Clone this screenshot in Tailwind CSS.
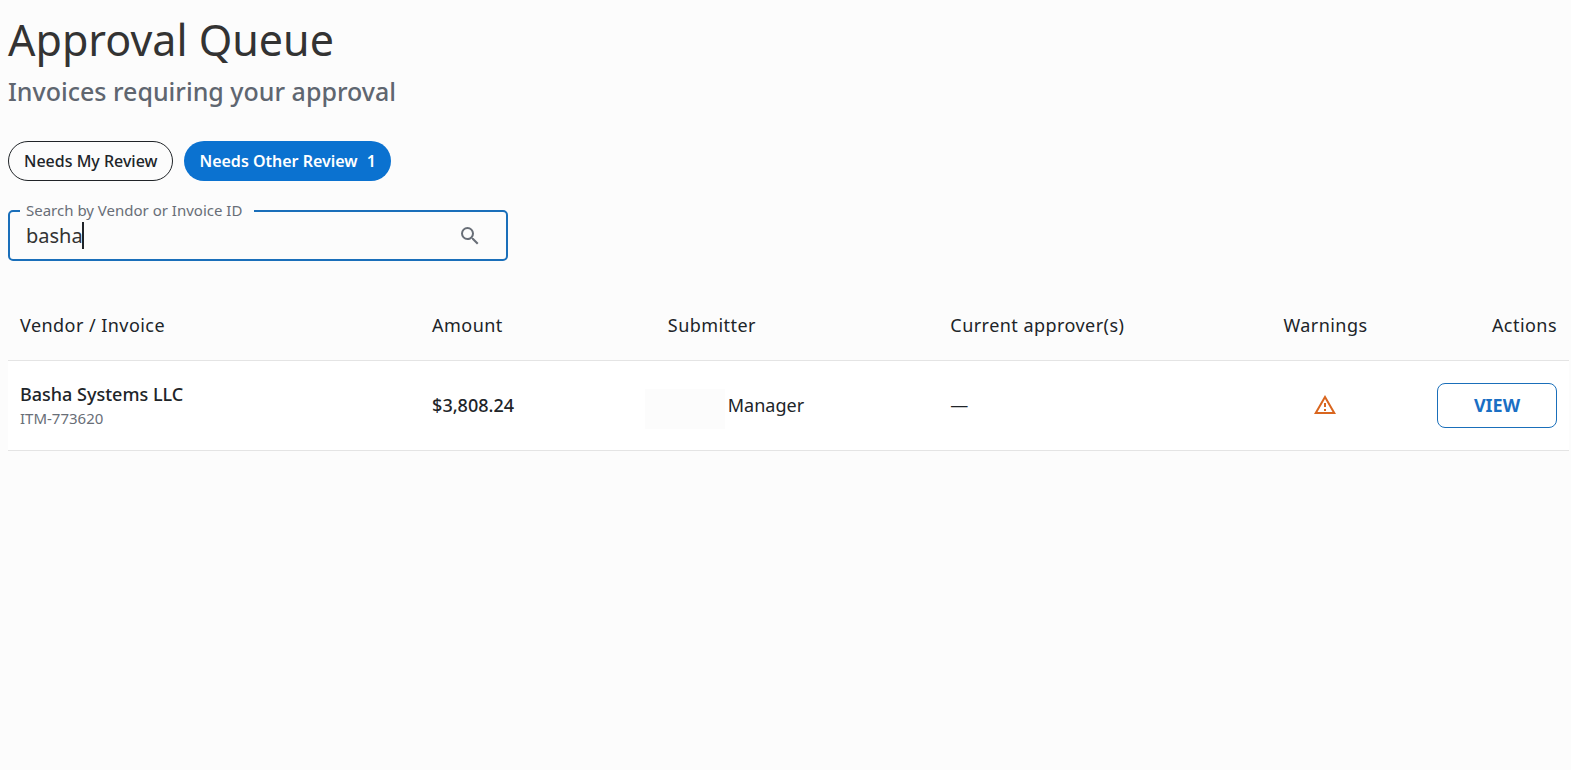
<!DOCTYPE html>
<html lang="en">
<head>
  <meta charset="UTF-8">
  <meta name="viewport" content="width=device-width, initial-scale=1.0">
  <title>Approval Queue</title>
  <script src="https://cdn.jsdelivr.net/npm/@tailwindcss/browser@4"></script>
</head>
<body class="bg-[#fcfcfc] font-['Noto_Sans',sans-serif] text-[#202428]">
  <main class="pl-2 pr-[2px] pt-[11px]">
    <h1 class="text-[43px] leading-[58px] text-[#333]">Approval Queue</h1>
    <p class="mt-1 text-[25px] leading-9 font-medium text-[#5f6670]">Invoices requiring your approval</p>

    <!-- Queue filters -->
    <div class="mt-8 flex gap-[11px]">
      <button type="button" class="h-10 rounded-full border border-[#202428] px-[15px] text-base font-medium">Needs My Review</button>
      <button type="button" class="flex h-10 items-center gap-[9px] rounded-full bg-[#0b72d0] px-[15px] text-base font-semibold text-white">
        <span>Needs Other Review</span>
        <span>1</span>
      </button>
    </div>

    <!-- Search -->
    <div class="relative mt-[29px] flex h-[51px] w-full max-w-[500px] items-center rounded-[5px] border-2 border-[#1a6fba] pl-4 pr-6">
      <label for="search" class="absolute -top-3 left-[10px] bg-[#fcfcfc] pl-[6px] pr-3 text-[15px] leading-5 text-[#686e77]">Search by Vendor or Invoice ID</label>
      <input id="search" type="text" value="basha" class="h-7 min-w-0 flex-1 bg-transparent text-xl text-[#333] caret-transparent outline-none">
      <span class="absolute left-[72px] top-[10px] h-[27px] w-[2px] bg-[#202428]"></span>
      <svg class="size-6 shrink-0 fill-[#686e77]" viewBox="0 0 24 24" aria-hidden="true">
        <path d="M15.5 14h-.79l-.28-.27A6.47 6.47 0 0 0 16 9.5 6.5 6.5 0 1 0 9.5 16c1.61 0 3.09-.59 4.23-1.57l.27.28v.79l5 4.99L20.49 19zm-6 0C7.01 14 5 11.99 5 9.5S7.01 5 9.5 5 14 7.01 14 9.5 11.99 14 9.5 14"/>
      </svg>
    </div>

    <table class="mt-[29px] w-full table-fixed border-collapse text-left">
      <thead>
        <tr class="h-[70px] border-b border-[#e4e4e4] text-lg tracking-wide *:px-3 *:font-normal">
          <th class="w-[26.4%]">Vendor / Invoice</th>
          <th class="w-[15.1%]">Amount</th>
          <th class="w-[18.1%]">Submitter</th>
          <th class="w-[18.5%]">Current approver(s)</th>
          <th class="w-[12.6%] text-center">Warnings</th>
          <th class="w-[9.3%] text-right">Actions</th>
        </tr>
      </thead>
      <tbody>
        <tr class="h-[90px] border-b border-[#e4e4e4] bg-white text-lg *:px-3">
          <td class="pt-[2px]">
            <div class="leading-6 font-medium">Basha Systems LLC</div>
            <div class="text-[15px] leading-6 text-[#686e77]">ITM-773620</div>
          </td>
          <td class="font-medium">$3,808.24</td>
          <td>
            <div class="-ml-[23px] flex h-12 items-center gap-[3px]">
              <span class="h-10 w-20 self-end bg-[#fcfcfc]"></span>
              <span>Manager</span>
            </div>
          </td>
          <td>—</td>
          <td>
            <svg class="mx-auto size-6 fill-[#d9661f]" viewBox="0 0 24 24" role="img" aria-label="Warning">
              <path d="M12 5.99 19.53 19H4.47zM12 2 1 21h22zm1 14h-2v2h2zm0-6h-2v4h2z"/>
            </svg>
          </td>
          <td>
            <button type="button" class="ml-auto block h-[45px] w-[120px] rounded-lg border border-[#1a6fba] text-lg font-bold text-[#1a6fc4]">VIEW</button>
          </td>
        </tr>
      </tbody>
    </table>
  </main>
</body>
</html>
